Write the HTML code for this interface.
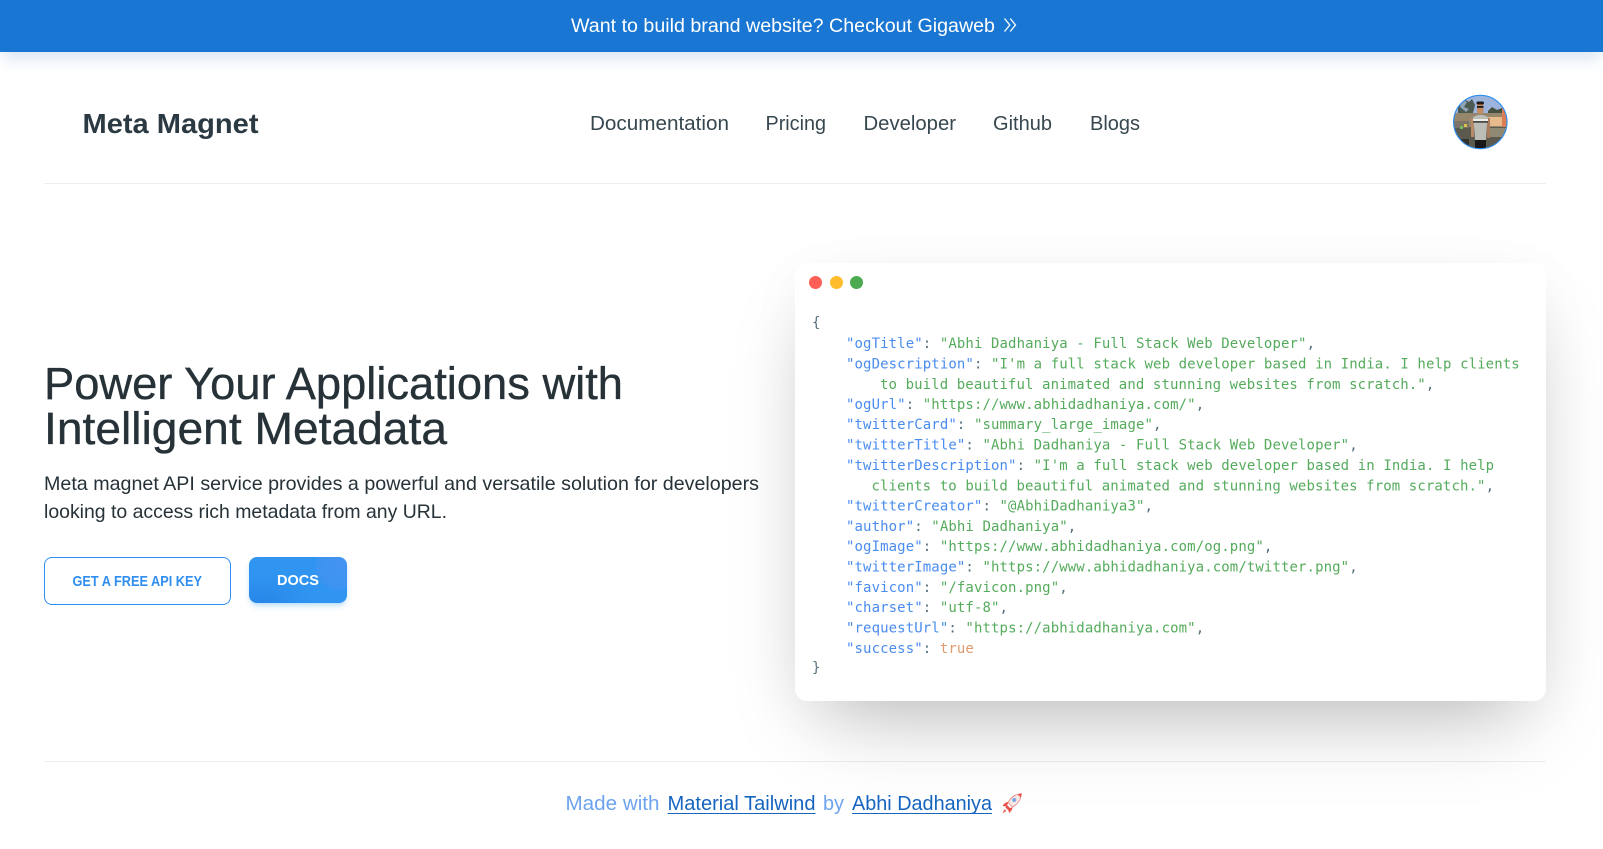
<!DOCTYPE html>
<html lang="en">
<head>
<meta charset="utf-8">
<title>Meta Magnet</title>
<style>
html,body{margin:0;padding:0;background:#fff;width:1603px;height:849px;overflow:hidden}
.abs{position:absolute}
#banner{left:0;top:0;width:1603px;height:52px;background:#1976d2;box-shadow:0 10px 15px -3px rgba(33,100,190,.17)}
.rule{left:44px;width:1502px;height:1px;background:#eceff1}
#card{left:795px;top:263px;width:751px;height:438px;background:#fff;border-radius:12px;box-shadow:0 38px 80px -26px rgba(0,0,0,.27),0 10px 60px rgba(0,0,0,.035)}
.dot{width:13px;height:13px;border-radius:50%;top:276px}
#b1{left:44px;top:557px;width:185px;height:46px;border:1px solid #2f8eef;border-radius:8px}
#b2{left:249px;top:557px;width:98px;height:46px;border-radius:8px;background:radial-gradient(circle at 92% 20%,rgba(120,140,240,.28) 0,rgba(120,140,240,.18) 22%,transparent 26%),radial-gradient(ellipse at 12% 100%,rgba(20,100,210,.3) 0,transparent 45%),#3095f1;box-shadow:0 4px 6px -1px rgba(33,150,243,.25),0 2px 4px -2px rgba(33,150,243,.2)}
svg{position:absolute;left:0;top:0}
text{font-family:"Liberation Sans",sans-serif}
.c text,.c{font-family:"DejaVu Sans Mono","Liberation Mono",monospace;font-size:14px;letter-spacing:.1px;fill:#546e7a}
.k{fill:#4a8cf0}.s{fill:#55ab5c}.t{fill:#e09c70}
</style>
</head>
<body>
<div class="abs rule" style="top:183px"></div>
<div class="abs rule" style="top:761px"></div>
<div class="abs" id="card"></div>
<div class="abs" id="banner"></div>
<div class="abs dot" style="left:809px;background:#ff5f56"></div>
<div class="abs dot" style="left:830px;background:#ffbd2e"></div>
<div class="abs dot" style="left:850px;background:#4caa50"></div>
<div class="abs" id="b1"></div>
<div class="abs" id="b2"></div>

<svg width="1603" height="849" viewBox="0 0 1603 849" xmlns="http://www.w3.org/2000/svg">
  <text x="571" y="32" font-size="19" fill="#fff" textLength="424" lengthAdjust="spacingAndGlyphs">Want to build brand website? Checkout Gigaweb</text>
  <path d="M1004.500 18.500l5.300 6.500-5.300 6.500M1010.200 18.500l5.300 6.500-5.300 6.500" fill="none" stroke="#fff" stroke-width="1.300"/>

  <text x="82.5" y="133" font-size="28" font-weight="700" fill="#2b3a42" textLength="176" lengthAdjust="spacingAndGlyphs">Meta Magnet</text>
  <g font-size="20" fill="#37474f">
    <text x="590" y="130" textLength="139" lengthAdjust="spacingAndGlyphs">Documentation</text>
    <text x="765.500" y="130" textLength="60.500" lengthAdjust="spacingAndGlyphs">Pricing</text>
    <text x="863.500" y="130" textLength="92.500" lengthAdjust="spacingAndGlyphs">Developer</text>
    <text x="993" y="130" textLength="59" lengthAdjust="spacingAndGlyphs">Github</text>
    <text x="1090" y="130" textLength="50" lengthAdjust="spacingAndGlyphs">Blogs</text>
  </g>

  <!-- avatar -->
  <defs><clipPath id="av"><circle cx="1480.3" cy="122" r="26.5"/></clipPath></defs>
  <g clip-path="url(#av)">
    <g transform="translate(1450 92)">
      <rect width="60" height="60" fill="#9db4dc"/>
      <path d="M8 10l6-3 5 3 3-3 3 6-2 8H8z" fill="#4c5a52"/>
      <path d="M12 7l5 3-3 5 5 2-3 3-6-5z" fill="#8fa3b5"/>
      <path d="M38 19l4-4 5 3 5-2 5 6v6H38z" fill="#46503f"/>
      <rect x="3" y="21" width="54" height="15" fill="#95866c"/>
      <rect x="38" y="25" width="18" height="9" fill="#e8bb8c"/>
      <rect x="52" y="14" width="6" height="28" fill="#dc7d54"/>
      <rect x="3" y="35" width="54" height="25" fill="#5c5a4e"/>
      <rect x="3" y="29" width="16" height="7" fill="#7b7466"/>
      <rect x="40" y="36" width="16" height="9" fill="#8f8872"/>
      <path d="M3 47h16v13H3z" fill="#33332e"/>
      <rect x="10" y="34" width="3" height="3" fill="#6dbb5a"/>
      <rect x="14" y="32" width="3" height="3" fill="#d8c24a"/>
      <rect x="21" y="26" width="3" height="19" fill="#b98a6a"/>
      <rect x="37" y="26" width="3" height="20" fill="#a97c5e"/>
      <path d="M23 25l5-2h5l5 2-1 8-1 15H25l-1-15z" fill="#bdbdb8"/>
      <rect x="23" y="27" width="15" height="2.200" fill="#efefea"/>
      <rect x="23" y="29.200" width="15" height="1.400" fill="#2a2a2a"/>
      <rect x="25" y="48" width="11" height="12" fill="#191919"/>
      <rect x="27" y="11" width="6.500" height="11" rx="3" fill="#c48a62"/>
      <rect x="26.500" y="9.500" width="7.500" height="3" rx="1.500" fill="#201a18"/>
      <rect x="27" y="14" width="6.500" height="1.800" fill="#1c1c1c"/>
    </g>
  </g>
  <circle cx="1480.3" cy="122" r="26.7" fill="none" stroke="#2f8eef" stroke-width="1.2"/>

  <g fill="#263238" font-size="45" stroke="#263238" stroke-width=".35">
    <text x="44" y="399" textLength="579" lengthAdjust="spacingAndGlyphs">Power Your Applications with</text>
    <text x="44" y="444" textLength="403" lengthAdjust="spacingAndGlyphs">Intelligent Metadata</text>
  </g>
  <g fill="#263238" font-size="19.5">
    <text x="44" y="490" textLength="715" lengthAdjust="spacingAndGlyphs">Meta magnet API service provides a powerful and versatile solution for developers</text>
    <text x="44" y="518" textLength="403" lengthAdjust="spacingAndGlyphs">looking to access rich metadata from any URL.</text>
  </g>

  <text x="72.5" y="586" font-size="15" font-weight="700" fill="#2f8eef" textLength="129.5" lengthAdjust="spacingAndGlyphs">GET A FREE API KEY</text>
  <text x="277" y="585" font-size="15" font-weight="700" fill="#fff" textLength="42" lengthAdjust="spacingAndGlyphs">DOCS</text>

  <g class="c">
    <text x="812" y="327">{</text>
    <text x="846" y="348"><tspan class="k">"ogTitle"</tspan>: <tspan class="s">"Abhi Dadhaniya - Full Stack Web Developer"</tspan>,</text>
    <text x="846" y="368.3"><tspan class="k">"ogDescription"</tspan>: <tspan class="s">"I'm a full stack web developer based in India. I help clients</tspan></text>
    <text x="880" y="388.9"><tspan class="s">to build beautiful animated and stunning websites from scratch."</tspan>,</text>
    <text x="846" y="409.2"><tspan class="k">"ogUrl"</tspan>: <tspan class="s">"https://www.abhidadhaniya.com/"</tspan>,</text>
    <text x="846" y="429"><tspan class="k">"twitterCard"</tspan>: <tspan class="s">"summary_large_image"</tspan>,</text>
    <text x="846" y="449.3"><tspan class="k">"twitterTitle"</tspan>: <tspan class="s">"Abhi Dadhaniya - Full Stack Web Developer"</tspan>,</text>
    <text x="846" y="470.1"><tspan class="k">"twitterDescription"</tspan>: <tspan class="s">"I'm a full stack web developer based in India. I help</tspan></text>
    <text x="871.5" y="490.4"><tspan class="s">clients to build beautiful animated and stunning websites from scratch."</tspan>,</text>
    <text x="846" y="510.7"><tspan class="k">"twitterCreator"</tspan>: <tspan class="s">"@AbhiDadhaniya3"</tspan>,</text>
    <text x="846" y="531"><tspan class="k">"author"</tspan>: <tspan class="s">"Abhi Dadhaniya"</tspan>,</text>
    <text x="846" y="551"><tspan class="k">"ogImage"</tspan>: <tspan class="s">"https://www.abhidadhaniya.com/og.png"</tspan>,</text>
    <text x="846" y="571.3"><tspan class="k">"twitterImage"</tspan>: <tspan class="s">"https://www.abhidadhaniya.com/twitter.png"</tspan>,</text>
    <text x="846" y="591.9"><tspan class="k">"favicon"</tspan>: <tspan class="s">"/favicon.png"</tspan>,</text>
    <text x="846" y="612.2"><tspan class="k">"charset"</tspan>: <tspan class="s">"utf-8"</tspan>,</text>
    <text x="846" y="632.5"><tspan class="k">"requestUrl"</tspan>: <tspan class="s">"https://abhidadhaniya.com"</tspan>,</text>
    <text x="846" y="652.8"><tspan class="k">"success"</tspan>: <tspan class="t">true</tspan></text>
    <text x="812" y="672">}</text>
  </g>

  <g font-size="20">
    <text x="565.5" y="810" fill="#6ea3ee" textLength="94" lengthAdjust="spacingAndGlyphs">Made with</text>
    <text x="667.5" y="810" fill="#1565c0" textLength="148" lengthAdjust="spacingAndGlyphs">Material Tailwind</text>
    <text x="823" y="810" fill="#6ea3ee" textLength="21" lengthAdjust="spacingAndGlyphs">by</text>
    <text x="852" y="810" fill="#1565c0" textLength="140" lengthAdjust="spacingAndGlyphs">Abhi Dadhaniya</text>
  </g>
  <rect x="667.5" y="813" width="148" height="1" fill="#1565c0"/>
  <rect x="852" y="813" width="140" height="1" fill="#1565c0"/>

  <!-- rocket -->
  <g transform="translate(994 785)">
    <path d="M14 17.500C17 12 21 9.500 27.500 8.500 27 14.500 24 19 18.500 22z" fill="#f4e9e6" stroke="#e8625a" stroke-width=".6"/>
    <path d="M23.500 9.200c2-.5 3.200-.7 4-.7-.1 1-.3 2.200-.8 4z" fill="#e5524a"/>
    <path d="M14.500 17c-2 0-4 1-6 4l4 .5z" fill="#ea4e47"/>
    <path d="M18.500 22c0 2-1 4-3.500 6l-.7-4z" fill="#ea4e47"/>
    <path d="M13 20l4 4-2.500 1.500-3-3z" fill="#e5524a"/>
    <path d="M10.500 24l2 2-4 2.500z" fill="#f0695f"/>
    <circle cx="20.200" cy="15" r="2.100" fill="#7fa8e0"/>
  </g>
</svg>
</body>
</html>
